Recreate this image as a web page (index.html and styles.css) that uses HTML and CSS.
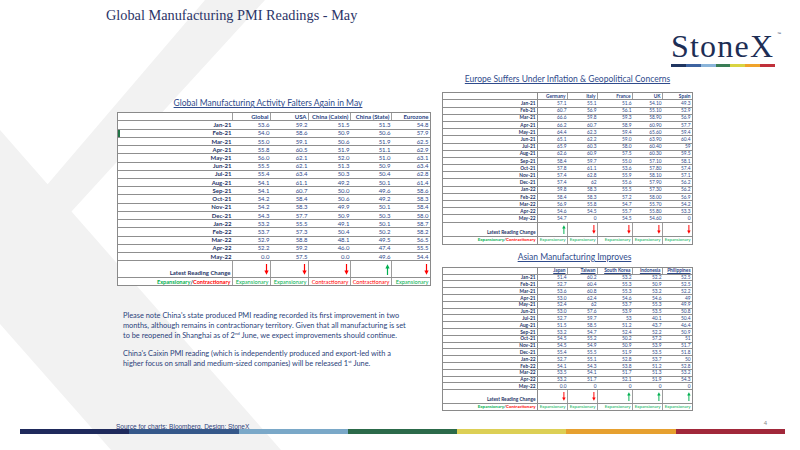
FILE: index.html
```html
<!DOCTYPE html>
<html lang="en">
<head>
<meta charset="utf-8">
<title>Global Manufacturing PMI Readings - May</title>
<link rel="stylesheet" href="styles.css">
</head>
<body>
<div class="slide">
  <svg class="watermark" viewBox="0 0 800 450" width="800" height="450" aria-hidden="true">
    <polygon points="205,0 265,0 71.5,211.5 281,450 111,450 0,324 0,130 47.6,184.3" fill="#f2f2f2"/>
  </svg>

  <header class="top">
    <h1 class="title">Global Manufacturing PMI Readings - May</h1>
    <div class="logo">
      <div class="logo-word">StoneX<span class="tm">™</span></div>
      <div class="logo-bar"><i class="c1"></i><i class="c2"></i><i class="c3"></i><i class="c4"></i><i class="c5"></i><i class="c6"></i><i class="c7"></i></div>
    </div>
  </header>

  <main class="content">
    <section class="col-left">
      <h2 class="tbl-title left-title">Global Manufacturing Activity Falters Again in May</h2>
      <div class="tbl g-tbl">
        <div class="r hd"><span class="lbl"></span><span>Global</span><span>USA</span><span>China (Caixin)</span><span>China (State)</span><span>Eurozone</span></div>
        <div class="r"><span class="lbl">Jan-21</span><span>53.6</span><span>59.2</span><span>51.5</span><span>51.3</span><span>54.8</span></div>
        <div class="r"><span class="lbl sel">Feb-21</span><span>54.0</span><span>58.6</span><span>50.9</span><span>50.6</span><span>57.9</span></div>
        <div class="r"><span class="lbl">Mar-21</span><span>55.0</span><span>59.1</span><span>50.6</span><span>51.9</span><span>62.5</span></div>
        <div class="r"><span class="lbl">Apr-21</span><span>55.8</span><span>60.5</span><span>51.9</span><span>51.1</span><span>62.9</span></div>
        <div class="r"><span class="lbl">May-21</span><span>56.0</span><span>62.1</span><span>52.0</span><span>51.0</span><span>63.1</span></div>
        <div class="r"><span class="lbl">Jun-21</span><span>55.5</span><span>62.1</span><span>51.3</span><span>50.9</span><span>63.4</span></div>
        <div class="r"><span class="lbl">Jul-21</span><span>55.4</span><span>63.4</span><span>50.3</span><span>50.4</span><span>62.8</span></div>
        <div class="r"><span class="lbl">Aug-21</span><span>54.1</span><span>61.1</span><span>49.2</span><span>50.1</span><span>61.4</span></div>
        <div class="r"><span class="lbl">Sep-21</span><span>54.1</span><span>60.7</span><span>50.0</span><span>49.6</span><span>58.6</span></div>
        <div class="r"><span class="lbl">Oct-21</span><span>54.2</span><span>58.4</span><span>50.6</span><span>49.2</span><span>58.3</span></div>
        <div class="r"><span class="lbl">Nov-21</span><span>54.2</span><span>58.3</span><span>49.9</span><span>50.1</span><span>58.4</span></div>
        <div class="r"><span class="lbl">Dec-21</span><span>54.3</span><span>57.7</span><span>50.9</span><span>50.3</span><span>58.0</span></div>
        <div class="r"><span class="lbl">Jan-22</span><span>53.2</span><span>55.5</span><span>49.1</span><span>50.1</span><span>58.7</span></div>
        <div class="r"><span class="lbl">Feb-22</span><span>53.7</span><span>57.3</span><span>50.4</span><span>50.2</span><span>58.2</span></div>
        <div class="r"><span class="lbl">Mar-22</span><span>52.9</span><span>58.8</span><span>48.1</span><span>49.5</span><span>56.5</span></div>
        <div class="r"><span class="lbl">Apr-22</span><span>52.2</span><span>59.2</span><span>46.0</span><span>47.4</span><span>55.5</span></div>
        <div class="r"><span class="lbl">May-22</span><span>0.0</span><span>57.5</span><span>0.0</span><span>49.6</span><span>54.4</span></div>
        <div class="r lrc"><span class="lbl">Latest Reading Change</span>
          <span><svg class="arr neg" viewBox="0 0 5 12"><path d="M2.5 0V8" stroke="currentColor" stroke-width="1.3"/><path d="M0.2 7.2H4.8L2.5 11.8Z" fill="currentColor"/></svg></span>
          <span><svg class="arr neg" viewBox="0 0 5 12"><path d="M2.5 0V8" stroke="currentColor" stroke-width="1.3"/><path d="M0.2 7.2H4.8L2.5 11.8Z" fill="currentColor"/></svg></span>
          <span><svg class="arr neg" viewBox="0 0 5 12"><path d="M2.5 0V8" stroke="currentColor" stroke-width="1.3"/><path d="M0.2 7.2H4.8L2.5 11.8Z" fill="currentColor"/></svg></span>
          <span><svg class="arr pos" viewBox="0 0 5 12"><path d="M2.5 12V4" stroke="currentColor" stroke-width="1.3"/><path d="M0.2 4.8H4.8L2.5 0.2Z" fill="currentColor"/></svg></span>
          <span><svg class="arr neg" viewBox="0 0 5 12"><path d="M2.5 0V8" stroke="currentColor" stroke-width="1.3"/><path d="M0.2 7.2H4.8L2.5 11.8Z" fill="currentColor"/></svg></span>
        </div>
        <div class="r exp"><span class="lbl"><b class="pos">Expansionary</b>/<b class="neg">Contractionary</b></span><span class="pos">Expansionary</span><span class="pos">Expansionary</span><span class="neg">Contractionary</span><span class="neg">Contractionary</span><span class="pos">Expansionary</span></div>
      </div>

      <div class="notes">
        <p>Please note China's state produced PMI reading recorded its first improvement in two<br>months, although remains in contractionary territory. Given that all manufacturing is set<br>to be reopened in Shanghai as of 2<sup>nd</sup> June, we expect improvements should continue.</p>
        <p>China's Caixin PMI reading (which is independently produced and export-led with a<br>higher focus on small and medium-sized companies) will be released 1<sup>st</sup> June.</p>
      </div>
    </section>

    <section class="col-right">
      <h2 class="tbl-title eu-title">Europe Suffers Under Inflation &amp; Geopolitical Concerns</h2>
      <div class="tbl s-tbl eu">
        <div class="r hd"><span class="lbl"></span><span>Germany</span><span>Italy</span><span>France</span><span>UK</span><span>Spain</span></div>
        <div class="r"><span class="lbl">Jan-21</span><span>57.1</span><span>55.1</span><span>51.6</span><span>54.10</span><span>49.3</span></div>
        <div class="r"><span class="lbl">Feb-21</span><span>60.7</span><span>56.9</span><span>56.1</span><span>55.10</span><span>52.9</span></div>
        <div class="r"><span class="lbl">Mar-21</span><span>66.6</span><span>59.8</span><span>59.3</span><span>58.90</span><span>56.9</span></div>
        <div class="r"><span class="lbl">Apr-21</span><span>66.2</span><span>60.7</span><span>58.9</span><span>60.90</span><span>57.7</span></div>
        <div class="r"><span class="lbl">May-21</span><span>64.4</span><span>62.3</span><span>59.4</span><span>65.60</span><span>59.4</span></div>
        <div class="r"><span class="lbl">Jun-21</span><span>65.1</span><span>62.2</span><span>59.0</span><span>63.90</span><span>60.4</span></div>
        <div class="r"><span class="lbl">Jul-21</span><span>65.9</span><span>60.3</span><span>58.0</span><span>60.40</span><span>59</span></div>
        <div class="r"><span class="lbl">Aug-21</span><span>62.6</span><span>60.9</span><span>57.5</span><span>60.30</span><span>59.5</span></div>
        <div class="r"><span class="lbl">Sep-21</span><span>58.4</span><span>59.7</span><span>55.0</span><span>57.10</span><span>58.1</span></div>
        <div class="r"><span class="lbl">Oct-21</span><span>57.8</span><span>61.1</span><span>53.6</span><span>57.80</span><span>57.4</span></div>
        <div class="r"><span class="lbl">Nov-21</span><span>57.4</span><span>62.8</span><span>55.9</span><span>58.10</span><span>57.1</span></div>
        <div class="r"><span class="lbl">Dec-21</span><span>57.4</span><span>62</span><span>55.6</span><span>57.90</span><span>56.2</span></div>
        <div class="r"><span class="lbl">Jan-22</span><span>59.8</span><span>58.3</span><span>55.5</span><span>57.30</span><span>56.2</span></div>
        <div class="r"><span class="lbl">Feb-22</span><span>58.4</span><span>58.3</span><span>57.2</span><span>58.00</span><span>56.9</span></div>
        <div class="r"><span class="lbl">Mar-22</span><span>56.9</span><span>55.8</span><span>54.7</span><span>55.70</span><span>54.2</span></div>
        <div class="r"><span class="lbl">Apr-22</span><span>54.6</span><span>54.5</span><span>55.7</span><span>55.80</span><span>53.3</span></div>
        <div class="r"><span class="lbl">May-22</span><span>54.7</span><span>0</span><span>54.5</span><span>54.60</span><span>0</span></div>
        <div class="r lrc"><span class="lbl">Latest Reading Change</span>
          <span><svg class="arr pos" viewBox="0 0 5 12"><path d="M2.5 12V4" stroke="currentColor" stroke-width="1.3"/><path d="M0.2 4.8H4.8L2.5 0.2Z" fill="currentColor"/></svg></span>
          <span><svg class="arr neg" viewBox="0 0 5 12"><path d="M2.5 0V8" stroke="currentColor" stroke-width="1.3"/><path d="M0.2 7.2H4.8L2.5 11.8Z" fill="currentColor"/></svg></span>
          <span><svg class="arr neg" viewBox="0 0 5 12"><path d="M2.5 0V8" stroke="currentColor" stroke-width="1.3"/><path d="M0.2 7.2H4.8L2.5 11.8Z" fill="currentColor"/></svg></span>
          <span><svg class="arr neg" viewBox="0 0 5 12"><path d="M2.5 0V8" stroke="currentColor" stroke-width="1.3"/><path d="M0.2 7.2H4.8L2.5 11.8Z" fill="currentColor"/></svg></span>
          <span><svg class="arr neg" viewBox="0 0 5 12"><path d="M2.5 0V8" stroke="currentColor" stroke-width="1.3"/><path d="M0.2 7.2H4.8L2.5 11.8Z" fill="currentColor"/></svg></span>
        </div>
        <div class="r exp"><span class="lbl"><b class="pos">Expansionary</b>/<b class="neg">Contractionary</b></span><span class="pos">Expansionary</span><span class="pos">Expansionary</span><span class="pos">Expansionary</span><span class="pos">Expansionary</span><span class="pos">Expansionary</span></div>
      </div>

      <h2 class="tbl-title as-title">Asian Manufacturing Improves</h2>
      <div class="tbl s-tbl as">
        <div class="r hd"><span class="lbl"></span><span>Japan</span><span>Taiwan</span><span>South Korea</span><span>Indonesia</span><span>Philippines</span></div>
        <div class="r"><span class="lbl">Jan-21</span><span>51.4</span><span>60.2</span><span>53.2</span><span>52.2</span><span>52.5</span></div>
        <div class="r"><span class="lbl">Feb-21</span><span>52.7</span><span>60.4</span><span>55.3</span><span>50.9</span><span>52.5</span></div>
        <div class="r"><span class="lbl">Mar-21</span><span>53.6</span><span>60.8</span><span>55.3</span><span>53.2</span><span>52.2</span></div>
        <div class="r"><span class="lbl">Apr-21</span><span>53.0</span><span>62.4</span><span>54.6</span><span>54.6</span><span>49</span></div>
        <div class="r"><span class="lbl">May-21</span><span>52.4</span><span>62</span><span>53.7</span><span>55.3</span><span>49.9</span></div>
        <div class="r"><span class="lbl">Jun-21</span><span>53.0</span><span>57.6</span><span>53.9</span><span>53.5</span><span>50.8</span></div>
        <div class="r"><span class="lbl">Jul-21</span><span>52.7</span><span>59.7</span><span>53</span><span>40.1</span><span>50.4</span></div>
        <div class="r"><span class="lbl">Aug-21</span><span>51.5</span><span>58.5</span><span>51.2</span><span>43.7</span><span>46.4</span></div>
        <div class="r"><span class="lbl">Sep-21</span><span>53.2</span><span>54.7</span><span>52.4</span><span>52.2</span><span>50.9</span></div>
        <div class="r"><span class="lbl">Oct-21</span><span>54.5</span><span>55.2</span><span>50.2</span><span>57.2</span><span>51</span></div>
        <div class="r"><span class="lbl">Nov-21</span><span>54.5</span><span>54.9</span><span>50.9</span><span>53.9</span><span>51.7</span></div>
        <div class="r"><span class="lbl">Dec-21</span><span>55.4</span><span>55.5</span><span>51.9</span><span>53.5</span><span>51.8</span></div>
        <div class="r"><span class="lbl">Jan-22</span><span>52.7</span><span>55.1</span><span>52.8</span><span>53.7</span><span>50</span></div>
        <div class="r"><span class="lbl">Feb-22</span><span>54.1</span><span>54.3</span><span>53.8</span><span>51.2</span><span>52.8</span></div>
        <div class="r"><span class="lbl">Mar-22</span><span>53.5</span><span>54.1</span><span>51.7</span><span>51.3</span><span>53.2</span></div>
        <div class="r"><span class="lbl">Apr-22</span><span>53.2</span><span>51.7</span><span>52.1</span><span>51.9</span><span>54.3</span></div>
        <div class="r"><span class="lbl">May-22</span><span>0.0</span><span>0</span><span>0</span><span>0</span><span>0</span></div>
        <div class="r lrc"><span class="lbl">Latest Reading Change</span>
          <span><svg class="arr neg" viewBox="0 0 5 12"><path d="M2.5 0V8" stroke="currentColor" stroke-width="1.3"/><path d="M0.2 7.2H4.8L2.5 11.8Z" fill="currentColor"/></svg></span>
          <span><svg class="arr neg" viewBox="0 0 5 12"><path d="M2.5 0V8" stroke="currentColor" stroke-width="1.3"/><path d="M0.2 7.2H4.8L2.5 11.8Z" fill="currentColor"/></svg></span>
          <span><svg class="arr pos" viewBox="0 0 5 12"><path d="M2.5 12V4" stroke="currentColor" stroke-width="1.3"/><path d="M0.2 4.8H4.8L2.5 0.2Z" fill="currentColor"/></svg></span>
          <span><svg class="arr pos" viewBox="0 0 5 12"><path d="M2.5 12V4" stroke="currentColor" stroke-width="1.3"/><path d="M0.2 4.8H4.8L2.5 0.2Z" fill="currentColor"/></svg></span>
          <span><svg class="arr pos" viewBox="0 0 5 12"><path d="M2.5 12V4" stroke="currentColor" stroke-width="1.3"/><path d="M0.2 4.8H4.8L2.5 0.2Z" fill="currentColor"/></svg></span>
        </div>
        <div class="r exp"><span class="lbl"><b class="pos">Expansionary</b>/<b class="neg">Contractionary</b></span><span class="pos">Expansionary</span><span class="pos">Expansionary</span><span class="pos">Expansionary</span><span class="pos">Expansionary</span><span class="pos">Expansionary</span></div>
      </div>
    </section>
  </main>

  <footer class="foot">
    <div class="foot-row">
      <span class="source">Source for charts: Bloomberg. Design: StoneX</span>
      <span class="page-num">4</span>
    </div>
    <div class="foot-bar"><i class="f1"></i><i class="f2"></i><i class="f3"></i><i class="f4"></i><i class="f5"></i><i class="f6"></i><i class="f7"></i></div>
  </footer>
</div>
</body>
</html>
```

FILE: styles.css
```css
* { box-sizing: border-box; margin: 0; padding: 0; }

body { margin: 0; background: #ffffff; }

.slide {
  position: relative;
  width: 800px;
  height: 450px;
  overflow: hidden;
  display: flex;
  flex-direction: column;
  font-family: Lato, "Open Sans", sans-serif;
  background: #ffffff;
}

.watermark {
  position: absolute;
  left: 0;
  top: 0;
  z-index: 0;
}

.top, .content, .foot { position: relative; z-index: 1; }

/* ---------- header ---------- */
.top {
  height: 70px;
  flex: none;
  display: flex;
  justify-content: space-between;
  align-items: flex-start;
  padding: 7.4px 25px 0 106px;
}

.title {
  font: 400 14.3px/16px "Liberation Serif", "Times New Roman", serif;
  color: #2b3467;
  white-space: nowrap;
}

.logo {
  width: 104px;
  margin-top: 22.4px;
}

.logo-word {
  position: relative;
  font: 400 32px/32px "Liberation Serif", "Times New Roman", serif;
  letter-spacing: 1.2px;
  color: #1d2e55;
  white-space: nowrap;
}

.tm {
  position: absolute;
  right: -6px;
  top: 2px;
  font: 400 4px/4px "Liberation Sans", Arial, sans-serif;
  letter-spacing: 0;
  color: #1d2e55;
}

.logo-bar {
  display: flex;
  height: 3.5px;
  margin-top: 1.8px;
}
.logo-bar i { flex: 1; }
.c1 { background: #1f3560; }
.c2 { background: #3d63a0; }
.c3 { background: #8ab4d9; }
.c4 { background: #3a7d55; }
.c5 { background: #d9d441; }
.c6 { background: #f0a32a; }
.c7 { background: #c0303a; }

/* ---------- content ---------- */
.content {
  flex: 1;
  display: grid;
  grid-template-columns: 314px 251px;
  column-gap: 11px;
  padding-left: 117px;
  align-items: start;
}

.col-left { padding-top: 28px; }
.col-right { padding-top: 4px; }

.tbl-title {
  font: 400 8.5px/10px Lato, "Open Sans", sans-serif;
  color: #2f4b8c;
  text-decoration: underline;
  text-align: center;
  white-space: nowrap;
}
.left-title { padding-right: 12px; }
.as-title { margin-top: 6.3px; padding-left: 14px; }

/* ---------- tables ---------- */
.tbl {
  border: 1px solid #8a8a8a;
  color: #2f4a8a;
  background: #ffffff;
}
.g-tbl { margin-top: 4.3px; }
.eu { margin-top: 8px; }
.as { margin-top: 5px; }

.tbl .r {
  display: grid;
  border-bottom: 1px solid #8f8f8f;
}
.tbl .r:last-child { border-bottom: 0; }

.tbl .r > * {
  display: flex;
  align-items: center;
  justify-content: flex-end;
  padding-right: 1.5px;
  white-space: nowrap;
  overflow: hidden;
  line-height: 1;
}

.lbl { font-weight: 700; color: #1f3566; }
.sel { box-shadow: inset 2px 0 0 #217346; }

.hd > * { font-weight: 700; text-decoration: underline; color: #2a4585; }
.hd > *, .lrc > *, .exp > * { border-right: 1px solid #9d9d9d; }
.hd > *:last-child, .lrc > *:last-child, .exp > *:last-child { border-right: 0; }

.lrc > * { justify-content: center; }
.lrc > .lbl { justify-content: flex-end; align-items: flex-end; padding-bottom: 0.6px; }
.exp > * { justify-content: center; }
.exp > .lbl { justify-content: flex-end; }
.exp b { font-weight: 700; }

.pos { color: #00b050; }
.neg { color: #ff0000; }

/* global table */
.g-tbl .r {
  grid-template-columns: 115px 38px 38px 42px 41px 38px;
  height: 8.23px;
  font-size: 6px;
}
.g-tbl .hd { height: 8.2px; }
.g-tbl .lrc { height: 16.7px; }
.g-tbl .exp { height: 7.3px; font-size: 5.6px; }
.g-tbl .arr { width: 5px; height: 11px; }

/* small tables */
.s-tbl .r {
  grid-template-columns: 95px 30px 30px 35px 30px 29px;
  font-size: 4.8px;
}
.s-tbl .r > .lbl { border-right: 1px solid #8a8a8a; }
.s-tbl .exp { font-size: 4.4px; }
.s-tbl .arr { width: 3.8px; height: 9px; }

.eu .r { height: 7.2px; }
.eu .hd { height: 7.4px; }
.eu .lrc { height: 14.2px; }
.eu .exp { height: 7.7px; }

.as .r { height: 6.8px; }
.as .hd { height: 6.9px; }
.as .lrc { height: 13.4px; }
.as .exp { height: 6.6px; }

/* ---------- notes ---------- */
.notes {
  margin-top: 25px;
  padding-left: 6px;
  font: 400 7.4px/9.8px Lato, "Open Sans", sans-serif;
  color: #2b3f7a;
  white-space: nowrap;
}
.notes p + p { margin-top: 8.8px; }
.notes sup {
  font-size: 4.5px;
  line-height: 0;
  vertical-align: 3px;
}

/* ---------- footer ---------- */
.foot {
  flex: none;
  height: 29.7px;
}
.foot-row {
  display: flex;
  align-items: flex-start;
  height: 9px;
  padding: 0 33px 0 116px;
}
.source {
  margin-top: 2.4px;
  font: 400 6.5px/7px "Liberation Sans", Arial, sans-serif;
  color: #2f3f7a;
  text-decoration: underline;
  white-space: nowrap;
}
.page-num {
  margin-left: auto;
  font: 400 6px/7px "Liberation Sans", Arial, sans-serif;
  color: #8a8a8a;
}
.foot-bar {
  display: flex;
  width: 765px;
  height: 5px;
  margin-left: 20px;
}
.foot-bar i { flex: 1; }
.f1 { background: #1f2a5c; }
.f2 { background: #35588a; }
.f3 { background: #7aa8c8; }
.f4 { background: #2c6a4a; }
.f5 { background: #dccf55; }
.f6 { background: #e6a02f; }
.f7 { background: #a1283a; }
```
